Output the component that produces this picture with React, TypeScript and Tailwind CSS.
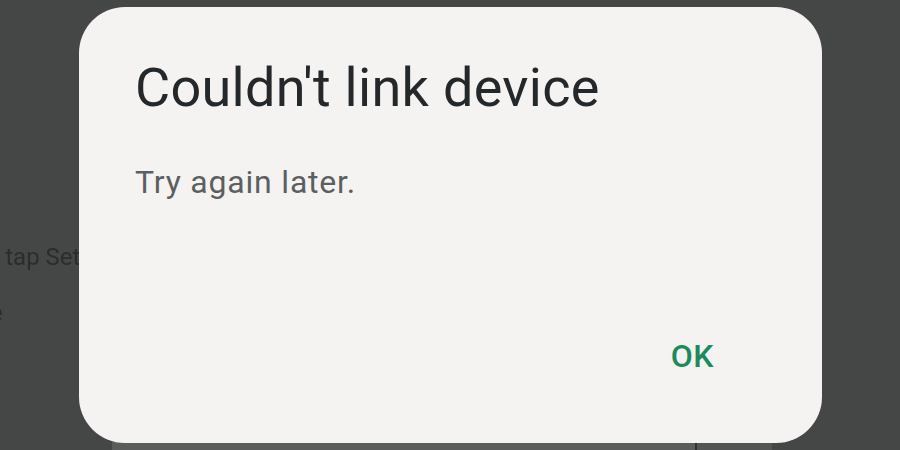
import React from 'react';

function Backdrop() {
  return (
    <div className="flex h-full w-full flex-col">
      <div className="h-[240px]" />
      <div className="flex items-center h-[34px] -ml-[22px]">
        <span className="text-[24px] text-[#2b2d2c] blur-[0.5px]">to tap Setup</span>
      </div>
      <div className="flex items-center h-[78px] -ml-[10px]">
        <span className="text-[24px] text-[#2b2d2c] blur-[0.5px]">e</span>
      </div>
      <div className="flex-1" />
      <div className="flex h-[8px] ml-[112px] w-[660px]">
        <div className="w-[583px] bg-[#5b5d5c]" />
        <div className="w-[2px] bg-[#2f3130]" />
        <div className="flex-1 bg-[#535554]" />
      </div>
    </div>
  );
}

export default function App() {
  return (
    <div
      className="relative w-[900px] h-[450px] overflow-hidden bg-[#454746]"
      style={{ fontFamily: 'Roboto, "Noto Sans", sans-serif' }}
    >
      <Backdrop />

      {/* the dialog lies over the page */}
      <div className="absolute left-[79px] top-[7px] w-[743px] h-[436px] rounded-[46px] bg-[#f4f3f1] flex flex-col px-[56px]">
        <h1 className="mt-[50px] text-[54px] leading-[62px] tracking-[0.3px] text-[#25282a]">
          Couldn't link device
        </h1>
        <p className="mt-[44px] text-[32px] leading-[38px] tracking-[0.8px] text-[#5c5f62]">
          Try again later.
        </p>
        <div className="flex-1" />
        <div className="flex justify-end mb-[67px] pr-[52px]">
          <button type="button" className="text-[32px] leading-[40px] font-medium tracking-[0.5px] text-[#1b8a5c]">
            OK
          </button>
        </div>
      </div>
    </div>
  );
}
